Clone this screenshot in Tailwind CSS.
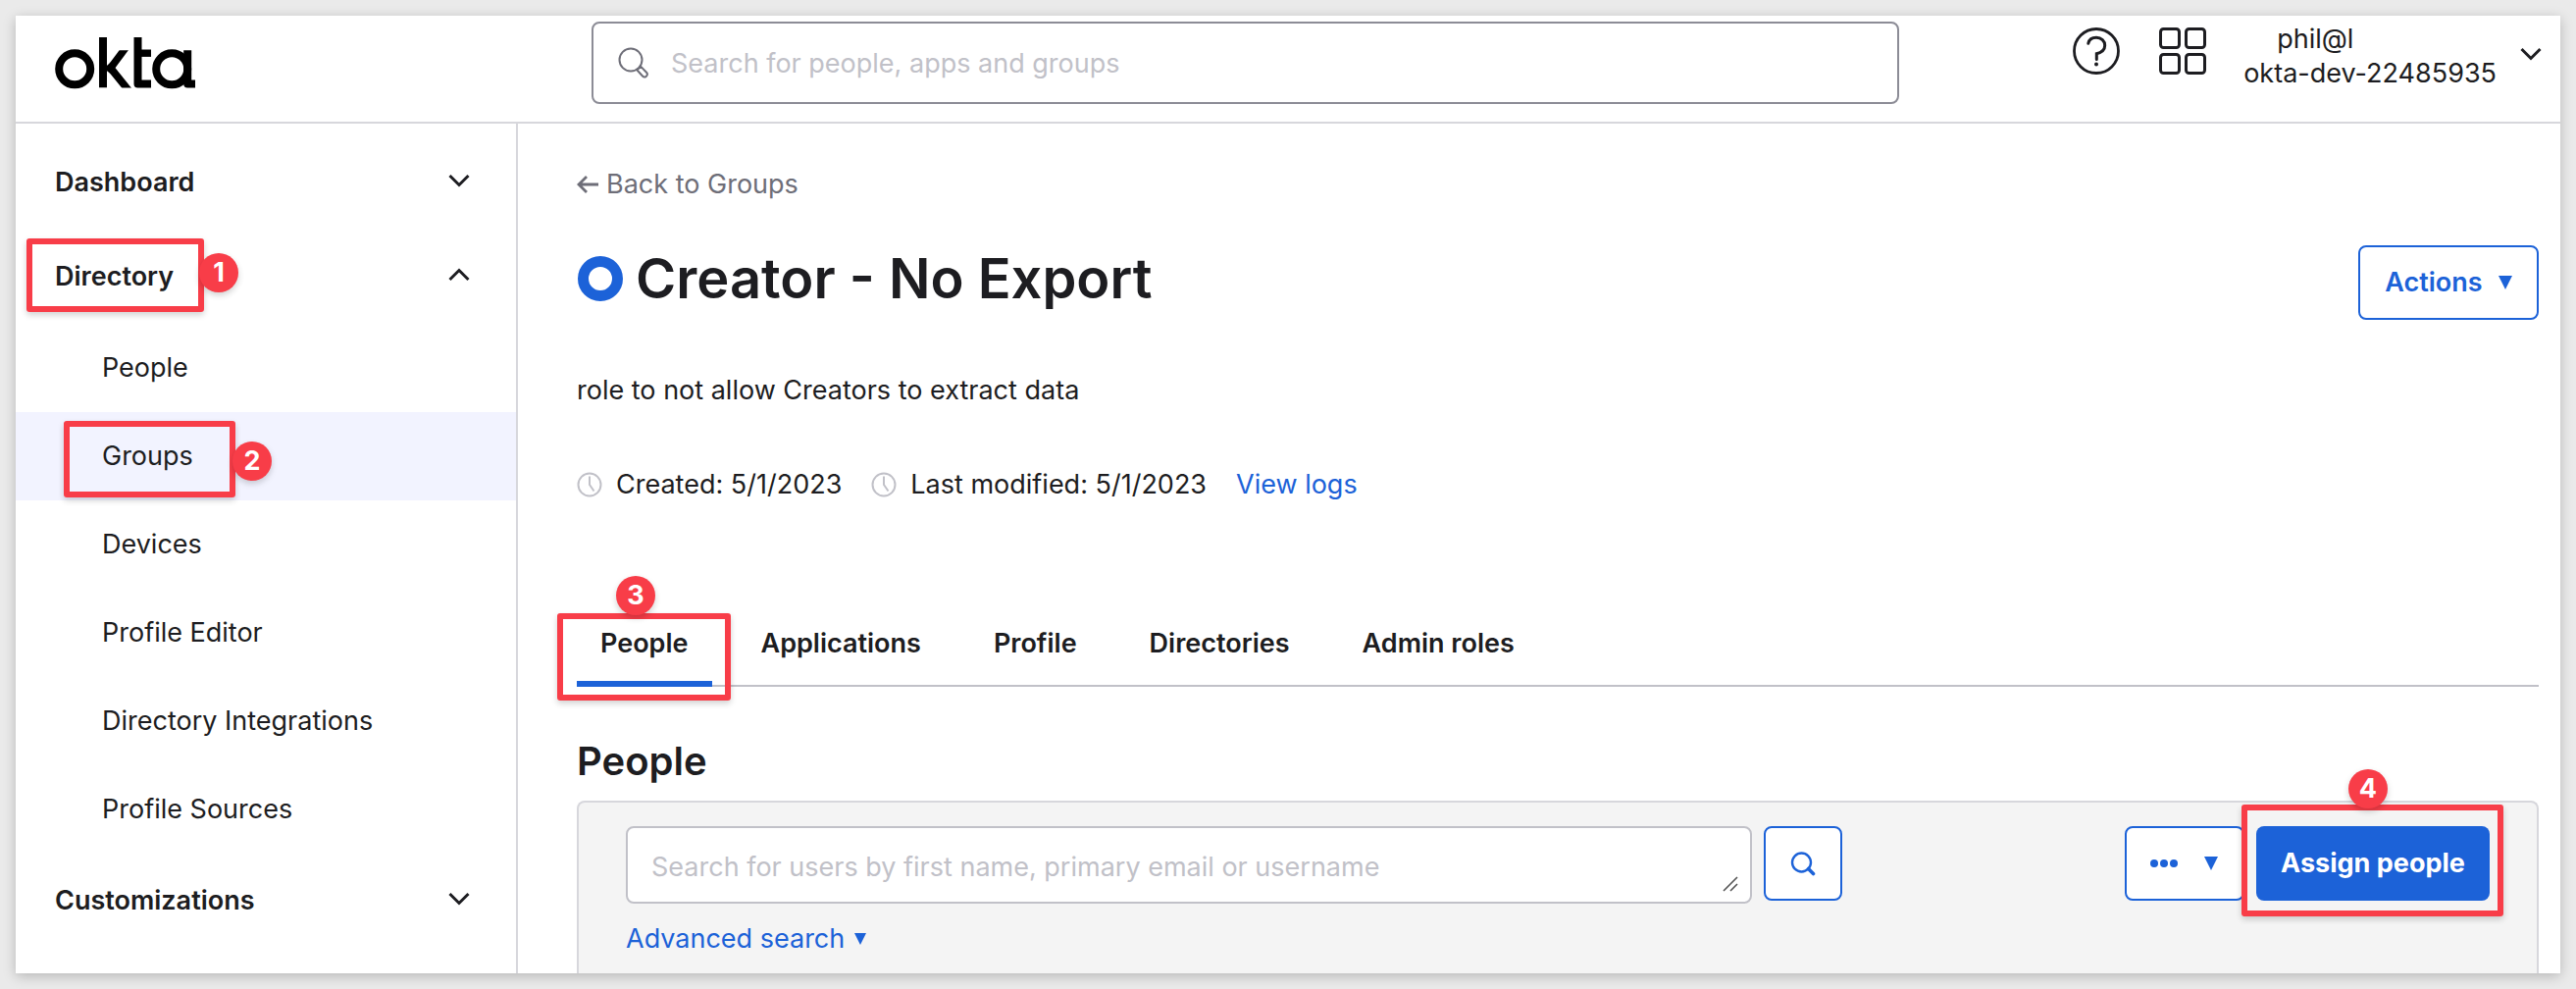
<!DOCTYPE html>
<html lang="en">
<head>
<meta charset="utf-8">
<meta name="viewport" content="width=device-width, initial-scale=1">
<title>Creator - No Export | Okta Groups</title>
<script src="https://cdn.jsdelivr.net/npm/@tailwindcss/browser@4"></script>
</head>
<body class="bg-[#eaeaea] font-['Inter',sans-serif] text-[27px] leading-9 text-[#1d1d21]">
<div class="flex min-h-screen flex-col p-4">
  <div class="flex flex-1 flex-col bg-white shadow-[0_3px_12px_rgba(0,0,0,0.22)]">

    <header class="flex h-[110px] items-start border-b-2 border-[#d7d7dc] pr-[19px] pl-10">
      <a href="#" aria-label="okta" class="mt-[22px] mr-[404px] shrink-0">
        <svg width="143" height="53" viewBox="0 0 143 53" fill="none" stroke="#000" stroke-width="8">
          <clipPath id="k"><rect x="44" y="0" width="40" height="51.5"/></clipPath>
          <clipPath id="arms"><rect x="50" y="13.3" width="32" height="38.2"/></clipPath>
          <circle cx="20.2" cy="32.3" r="16"/>
          <line x1="49" y1="0" x2="49" y2="51.5" clip-path="url(#k)"/>
          <g clip-path="url(#arms)">
            <line x1="54" y1="35" x2="73" y2="9.5" stroke-width="7.4"/>
            <line x1="54" y1="28" x2="77" y2="56.5" stroke-width="7.6"/>
          </g>
          <polyline points="84.5,0 84.5,47.5 98,47.5" stroke-linejoin="round"/>
          <line x1="84.5" y1="16.2" x2="98" y2="16.2" stroke-width="7.4"/>
          <circle cx="119.2" cy="32.3" r="16"/>
          <polyline points="135.2,13.3 135.2,47.5 143,47.5" stroke-linejoin="round"/>
        </svg>
      </a>
      <label class="mt-[6px] flex h-[84px] flex-1 items-center rounded-lg border-2 border-[#8c8c96] bg-white pl-[25px]">
        <svg class="shrink-0" width="32" height="32" viewBox="0 0 32 32" fill="none" stroke="#6e6e78" stroke-width="2">
          <circle cx="13" cy="13" r="11.5"/>
          <path d="M19.3 23.3l4-3.4 5.7 5.900a2.700 2.700 0 0 1-4 3.700z" stroke-linejoin="round"/>
        </svg>
        <input type="search" aria-label="Search for people, apps and groups" placeholder="Search for people, apps and groups" class="ml-[22px] h-full min-w-0 flex-1 bg-transparent outline-none placeholder:text-[#c1c1c8]">
      </label>
      <button type="button" aria-label="Help" class="mt-3 ml-[177px] shrink-0">
        <svg width="48" height="48" viewBox="0 0 48 48" fill="none" stroke="#1d1d21" stroke-width="2.8">
          <circle cx="24" cy="24" r="22.5"/>
          <path d="M15.8 16.2C16.6 12.300 20 10.300 24 10.300c5.200 0 8.700 3.600 8.700 8 0 4.500-3.200 7.200-8.400 8.400v5.800" stroke-linecap="round" stroke-width="3"/>
          <circle cx="24" cy="37.600" r="2" fill="#1d1d21" stroke="none"/>
        </svg>
      </button>
      <button type="button" aria-label="My apps" class="mt-3 ml-10 shrink-0">
        <svg width="48" height="48" viewBox="0 0 48 48" fill="none" stroke="#1d1d21" stroke-width="3">
          <rect x="1.5" y="1.5" width="19" height="19" rx="3"/><rect x="27.5" y="1.5" width="19" height="19" rx="3"/>
          <rect x="1.500" y="27.500" width="19" height="19" rx="3"/><rect x="27.500" y="27.500" width="19" height="19" rx="3"/>
        </svg>
      </button>
      <button type="button" class="ml-[38px] flex shrink-0 items-start text-left">
        <span class="mt-[6px] leading-[35px]"><span class="block pl-[34px]">phil@l</span><span class="block">okta-dev-22485935</span></span>
        <svg class="mt-8 ml-6" width="22" height="14" viewBox="0 0 22 14" fill="none" stroke="#1d1d21" stroke-width="3"><path d="M1.500 2L11 11.500 20.500 2"/></svg>
      </button>
    </header>

    <div class="flex flex-1">
      <nav class="w-[512px] shrink-0 border-r-2 border-[#d7d7dc] pt-3" aria-label="Main">
        <button type="button" class="flex h-24 w-full items-center justify-between pr-[47px] pl-10 font-semibold">Dashboard
          <svg class="mb-1" width="22" height="14" viewBox="0 0 22 14" fill="none" stroke="#1d1d21" stroke-width="3"><path d="M1.500 2L11 11.500 20.500 2"/></svg>
        </button>
        <div class="relative">
          <button type="button" class="flex h-24 w-full items-center justify-between pr-[47px] pl-10 font-semibold">Directory
            <svg class="mb-1" width="22" height="14" viewBox="0 0 22 14" fill="none" stroke="#1d1d21" stroke-width="3"><path d="M1.500 12L11 2.500 20.500 12"/></svg>
          </button>
          <div class="pointer-events-none absolute top-[9px] left-[11px] h-[75px] w-[181px] rounded-[3px] border-6 border-[#f83d48] shadow-[0_3px_6px_rgba(0,0,0,0.18)]"></div>
          <div class="absolute top-6 left-[187px] flex size-10 items-center justify-center rounded-full bg-[#f83d48] font-bold text-white shadow-[0_3px_6px_rgba(0,0,0,0.18)]">1</div>
        </div>
        <ul>
          <li><a href="#" class="flex h-[90px] items-center pl-[88px]">People</a></li>
          <li class="relative">
            <a href="#" aria-current="page" class="flex h-[90px] items-center bg-[#f2f3ff] pl-[88px]">Groups</a>
            <div class="pointer-events-none absolute top-[9px] left-[49px] h-[78px] w-[175px] rounded-[3px] border-6 border-[#f83d48] shadow-[0_3px_6px_rgba(0,0,0,0.18)]"></div>
            <div class="absolute top-[30px] left-[221px] flex size-10 items-center justify-center rounded-full bg-[#f83d48] font-bold text-white shadow-[0_3px_6px_rgba(0,0,0,0.18)]">2</div>
          </li>
          <li><a href="#" class="flex h-[90px] items-center pl-[88px]">Devices</a></li>
          <li><a href="#" class="flex h-[90px] items-center pl-[88px]">Profile Editor</a></li>
          <li><a href="#" class="flex h-[90px] items-center pl-[88px]">Directory Integrations</a></li>
          <li><a href="#" class="flex h-[90px] items-center pl-[88px]">Profile Sources</a></li>
        </ul>
        <button type="button" class="flex h-24 w-full items-center justify-between pr-[47px] pl-10 font-semibold">Customizations
          <svg class="mb-1" width="22" height="14" viewBox="0 0 22 14" fill="none" stroke="#1d1d21" stroke-width="3"><path d="M1.500 2L11 11.500 20.500 2"/></svg>
        </button>
      </nav>

      <main class="flex min-w-0 flex-1 flex-col pt-11 pr-[22px] pl-[60px]">
        <a href="#" class="flex items-center gap-2 self-start text-[#6e6e78]">
          <svg width="22" height="20" viewBox="0 0 22 20" fill="none" stroke="#6e6e78" stroke-width="2.800"><path d="M22 10H2.500M10 2L2 10l8 8"/></svg>
          Back to Groups
        </a>

        <div class="mt-11 flex items-start justify-between">
          <h1 class="flex items-center gap-[13px] text-[56px] leading-[68px] font-semibold">
            <svg width="47" height="46" viewBox="0 0 47 46" fill="none" stroke="#1c62d8" stroke-width="11"><circle cx="24" cy="23" r="17.500"/></svg>
            Creator - No Export
          </h1>
          <button type="button" class="flex h-[76px] w-[184px] items-center justify-center gap-4 rounded-lg border-2 border-[#1c62d8] font-semibold text-[#1c62d8]">Actions
            <svg width="14" height="14" viewBox="0 0 14 14" fill="#1c62d8"><path d="M0 0H14L7 14z"/></svg>
          </button>
        </div>

        <p class="mt-[54px]">role to not allow Creators to extract data</p>

        <div class="mt-[60px] flex items-center">
          <svg width="26" height="26" viewBox="0 0 26 26" fill="none" stroke="#c1c1c8" stroke-width="2"><circle cx="13" cy="13" r="11.500"/><path d="M13 4.500V13l4.500 6.500"/></svg>
          <span class="ml-[14px]">Created: 5/1/2023</span>
          <svg class="ml-[30px]" width="26" height="26" viewBox="0 0 26 26" fill="none" stroke="#c1c1c8" stroke-width="2"><circle cx="13" cy="13" r="11.500"/><path d="M13 4.500V13l4.500 6.500"/></svg>
          <span class="ml-[14px]">Last modified: 5/1/2023</span>
          <a href="#" class="ml-[30px] text-[#1c62d8]">View logs</a>
        </div>

        <div class="mt-[126px] flex gap-[26px] border-b-2 border-[#c1c1c8] font-semibold" role="tablist">
          <div class="relative">
            <button type="button" role="tab" aria-selected="true" class="-mb-[2px] h-[62px] border-b-6 border-[#1c62d8] px-6 pb-5">People</button>
            <div class="pointer-events-none absolute -top-[13px] -left-5 h-[89px] w-[177px] rounded-[3px] border-6 border-[#f83d48] shadow-[0_3px_6px_rgba(0,0,0,0.18)]"></div>
            <div class="absolute -top-[51px] left-10 flex size-10 items-center justify-center rounded-full bg-[#f83d48] font-bold text-white shadow-[0_3px_6px_rgba(0,0,0,0.18)]">3</div>
          </div>
          <button type="button" role="tab" class="px-6 pb-6">Applications</button>
          <button type="button" role="tab" class="px-6 pb-6">Profile</button>
          <button type="button" role="tab" class="px-6 pb-6">Directories</button>
          <button type="button" role="tab" class="px-6 pb-6">Admin roles</button>
        </div>

        <h2 class="mt-[52px] text-[40px] leading-[48px] font-semibold">People</h2>

        <section class="mt-4 flex-1 rounded-t-lg border-2 border-b-0 border-[#d7d7dc] bg-[#f4f4f4] px-12 pt-6">
          <div class="flex items-start gap-3">
            <label class="relative flex-1">
              <textarea rows="1" aria-label="Search users" placeholder="Search for users by first name, primary email or username" class="block h-[79px] w-full resize-none overflow-hidden rounded-lg border-2 border-[#c1c1c8] bg-white px-6 pt-[22px] outline-none placeholder:text-[#c1c1c8]"></textarea>
              <svg class="absolute right-[14px] bottom-3" width="16" height="16" viewBox="0 0 16 16" fill="none" stroke="#555" stroke-width="1.600"><path d="M1 15L15 1M8 15l7-7"/></svg>
            </label>
            <button type="button" aria-label="Search" class="flex h-[76px] w-20 items-center justify-center rounded-lg border-2 border-[#1c62d8] bg-white">
              <svg width="26" height="26" viewBox="0 0 26 26" fill="none" stroke="#1c62d8"><circle cx="11.500" cy="12" r="9.500" stroke-width="2.400"/><path d="M18.500 18.500l5 5" stroke-width="3.600" stroke-linecap="round"/></svg>
            </button>
            <button type="button" aria-label="More actions" class="ml-[276px] flex h-[76px] w-[122px] items-center gap-[27px] rounded-lg border-2 border-[#1c62d8] bg-white pl-6">
              <svg width="28" height="8" viewBox="0 0 28 8" fill="#1c62d8"><circle cx="4" cy="4" r="4"/><circle cx="14" cy="4" r="4"/><circle cx="24" cy="4" r="4"/></svg>
              <svg width="14" height="14" viewBox="0 0 14 14" fill="#1c62d8"><path d="M0 0H14L7 14z"/></svg>
            </button>
            <div class="relative">
              <button type="button" class="h-[76px] w-[238px] rounded-lg bg-[#1c62d8] font-bold text-white">Assign people</button>
              <div class="pointer-events-none absolute -top-[22px] -left-[15px] h-[114px] w-[267px] rounded-[3px] border-6 border-[#f83d48] shadow-[0_3px_6px_rgba(0,0,0,0.18)]"></div>
              <div class="absolute -top-[58px] left-[94px] flex size-10 items-center justify-center rounded-full bg-[#f83d48] font-bold text-white shadow-[0_3px_6px_rgba(0,0,0,0.18)]">4</div>
            </div>
          </div>
          <button type="button" class="mt-[18px] flex items-center gap-[10px] text-[#1c62d8]">Advanced search
            <svg width="12" height="12" viewBox="0 0 12 12" fill="#1c62d8"><path d="M0 0H12L6 12z"/></svg>
          </button>
        </section>
      </main>
    </div>
  </div>
</div>
</body>
</html>
